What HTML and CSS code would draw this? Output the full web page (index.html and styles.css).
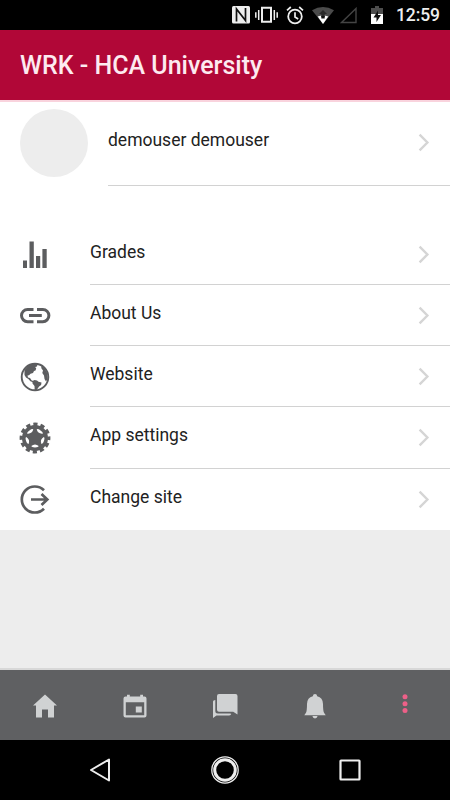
FILE: index.html
```html
<!DOCTYPE html>
<html lang="en">
<head>
    <meta charset="UTF-8">
    <meta name="viewport" content="width=device-width, initial-scale=1.0">
    <title>WRK - HCA University</title>
    <link rel="stylesheet" href="styles.css">
</head>
<body>
    <div class="status-bar">
        <!-- nfc -->
        <svg width="18" height="18" viewBox="0 0 18 18"><rect width="18" height="17.5" rx="1.5" fill="#eee"/><path d="M4.500 15.500V3L13.500 14.500V2" fill="none" stroke="#111" stroke-width="1.700"/></svg>
        <!-- vibrate -->
        <svg class="vibrate" width="23" height="18" viewBox="0 0 23 18"><path d="M7 1.800h9v14H7z" fill="none" stroke="#eee" stroke-width="2"/><path d="M3.700 4v10M.8 6.200v5.500M19.300 4v10M22.200 6.200v5.500" stroke="#eee" stroke-width="1.500"/></svg>
        <!-- alarm -->
        <svg class="alarm" width="18" height="19" viewBox="0 0 18 19"><circle cx="9" cy="10.500" r="6.800" fill="none" stroke="#eee" stroke-width="1.800"/><path d="M1 4.300L4.800 1M17 4.300L13.200 1M9 6.300v4.700l3.200 2" fill="none" stroke="#eee" stroke-width="1.700"/></svg>
        <!-- wifi -->
        <svg class="wifi" width="22" height="17" viewBox="0 0 22 17"><path d="M0 3.200Q11-3 22 3.200L11 17z" fill="#4b4b4b"/><path d="M5.700 9.600L11 17l5.300-7.400Q11 7.500 5.700 9.600z" fill="#fff"/><path d="M11 3l4 4h-2.300v3H9.300V7H7z" fill="#292929"/><path d="M9.300 9h3.400v2.500H9.300z" fill="#111"/></svg>
        <!-- signal -->
        <svg class="signal" width="17" height="17" viewBox="0 0 17 17"><path d="M1.500 15.500L16 1.500v14z" fill="none" stroke="#444" stroke-width="1.400"/></svg>
        <!-- battery -->
        <svg class="battery" width="12" height="18" viewBox="0 0 12 18"><path d="M4 0h4v2h4v16H0V2h4z" fill="#4d4d4d"/><path d="M0 8h12v10H0z" fill="#fff"/><path d="M7 4.500L2.500 11.500h3V16L10 9H7z" fill="#111"/></svg>
        <span class="clock">12:59</span>
    </div>

    <div class="header">
        <h1>WRK - HCA University</h1>
    </div>

    <div class="content">
        <div class="profile">
            <div class="avatar"></div>
            <div class="profile-name">
                <span>demouser demouser</span>
                <svg class="arrow" width="12" height="19" viewBox="0 0 12 19"><path d="M1.600 1.600L9.400 9.500L1.600 17.400"/></svg>
            </div>
        </div>

        <div class="menu">
            <div class="menu-item">
                <div class="menu-icon">
                    <svg width="32" height="32" viewBox="0 0 32 32"><path d="M4 21.500h4V29H4zM10.500 2.500h4.300V29h-4.300zM17 17h4.200v12H17zM23.400 10h4.300v19h-4.300z"/></svg>
                </div>
                <div class="menu-label">
                    <span>Grades</span>
                    <svg class="arrow" width="12" height="19" viewBox="0 0 12 19"><path d="M1.600 1.600L9.400 9.500L1.600 17.400"/></svg>
                </div>
            </div>
            <div class="menu-item">
                <div class="menu-icon">
                    <svg width="32" height="32" viewBox="0 0 32 32"><path d="M14.500 9.500H8.600a6.100 6.100 0 0 0 0 12.200h5.900M18 9.500h5.800a6.100 6.100 0 0 1 0 12.200H18M10 15.600h12.800" fill="none" stroke="#5c5d5f" stroke-width="3"/></svg>
                </div>
                <div class="menu-label">
                    <span>About Us</span>
                    <svg class="arrow" width="12" height="19" viewBox="0 0 12 19"><path d="M1.600 1.600L9.400 9.500L1.600 17.400"/></svg>
                </div>
            </div>
            <div class="menu-item">
                <div class="menu-icon">
                    <svg width="32" height="32" viewBox="0 0 32 32"><circle cx="16" cy="16" r="13.300" fill="none" stroke="#5c5d5f" stroke-width="1.900"/><path d="M5.500 9L10 4l6-1.500 2.500 1-.5 2-1.800.5 1 1.500-.7 2-1.500.5-1 2-2.500.7-1.500 1.500-1.500.3.500 2 2 .5 1.500 2.300 2 1-.6.900-2.500-.9-2-2.300-2.400-1.500-1.500-2.500z"/><path d="M13.500 20l2-1 2.500.5 1.500 1.200 3 .8-.4 2.500-2 1.500-2.600 3.700-1.800-.5-.2-3.700-2-2.500z"/><path d="M22 5l3.500 2 3 5.500.2 5-1.700 3-1.500-2.500-.5-3.500-1.700-2.500.7-2.500-1.500-2z"/></svg>
                </div>
                <div class="menu-label">
                    <span>Website</span>
                    <svg class="arrow" width="12" height="19" viewBox="0 0 12 19"><path d="M1.600 1.600L9.400 9.500L1.600 17.400"/></svg>
                </div>
            </div>
            <div class="menu-item">
                <div class="menu-icon">
                    <!-- 12 teeth, five openings -->
                    <svg width="32" height="32" viewBox="0 0 32 32">
                        <circle cx="16" cy="16" r="13"/>
                        <circle cx="16" cy="16" r="13.700" fill="none" stroke="#5c5d5f" stroke-width="3.400" stroke-dasharray="4.200 2.973" stroke-dashoffset="2.100"/>
                        <g fill="#fff">
                            <path id="hole" d="M12.300 24Q16 20.800 19.700 24Q19.500 25.400 16 25.400Q12.500 25.400 12.300 24z"/>
                            <use href="#hole" transform="rotate(72 16 16)"/>
                            <use href="#hole" transform="rotate(144 16 16)"/>
                            <use href="#hole" transform="rotate(216 16 16)"/>
                            <use href="#hole" transform="rotate(288 16 16)"/>
                        </g>
                    </svg>
                </div>
                <div class="menu-label">
                    <span>App settings</span>
                    <svg class="arrow" width="12" height="19" viewBox="0 0 12 19"><path d="M1.600 1.600L9.400 9.500L1.600 17.400"/></svg>
                </div>
            </div>
            <div class="menu-item">
                <div class="menu-icon">
                    <svg width="32" height="32" viewBox="0 0 32 32"><path d="M25 6.300a13 13 0 1 0 0 18.400M12 15.500h16M22.500 10L28.300 15.500l-5.800 5.500" fill="none" stroke="#5c5d5f" stroke-width="2.700"/></svg>
                </div>
                <div class="menu-label">
                    <span>Change site</span>
                    <svg class="arrow" width="12" height="19" viewBox="0 0 12 19"><path d="M1.600 1.600L9.400 9.500L1.600 17.400"/></svg>
                </div>
            </div>
        </div>
    </div>

    <div class="tabs">
        <div class="tab">
            <svg width="26" height="26" viewBox="0 0 26 26"><path d="M13 1.500L25 12.500h-3V24.500h-6v-8h-6v8H4V12.500H1z"/></svg>
        </div>
        <div class="tab">
            <svg width="26" height="26" viewBox="0 0 26 26"><path fill-rule="evenodd" d="M5 1.700h2.800v1.800h10.400V1.700H21v1.800h1.500q2 0 2 2v17q0 2-2 2h-19q-2 0-2-2v-17q0-2 2-2H5zM3.800 9.300v12.900h18.400V9.300zM13.800 13.500h6v6h-6z"/></svg>
        </div>
        <div class="tab">
            <svg width="26" height="26" viewBox="0 0 26 26"><path d="M7 1h16.500q2 0 2 2v18.500l-4.300-2.700H7q-2 0-2-2V3q0-2 2-2z"/><path d="M1 8.500q0-1.200 2.300-1.500v11q0 2.500 2.500 2.500h12.500l1 .5q-1 1.500-2.500 1.500H4.500L1 25z"/></svg>
        </div>
        <div class="tab">
            <svg width="26" height="26" viewBox="0 0 26 26"><path d="M13 1q2 0 2.200 2.300 5.600 1.300 5.800 7.700 0 7.500 1.200 9l1.500 2.300H2.300L3.800 20Q5 18.500 5 11q.2-6.400 5.800-7.700Q11 1 13 1zM10.400 23h5.200q-.4 2.400-2.600 2.400T10.400 23z"/></svg>
        </div>
        <div class="tab active">
            <svg width="26" height="26" viewBox="0 0 26 26"><circle cx="13" cy="3.700" r="2.500"/><circle cx="13" cy="10.700" r="2.500"/><circle cx="13" cy="17.500" r="2.500"/></svg>
        </div>
    </div>

    <div class="nav-bar">
        <svg width="30" height="30" viewBox="0 0 30 30"><path d="M6 15L24 4.500v21z" stroke-width="2" stroke-linejoin="round"/></svg>
        <svg width="30" height="30" viewBox="0 0 30 30"><circle cx="15" cy="15" r="13.200" stroke-width="1.300"/><circle cx="15" cy="15" r="10.300" stroke-width="3"/></svg>
        <svg width="30" height="30" viewBox="0 0 30 30"><rect x="5.500" y="5.500" width="19" height="19" rx=".5" stroke-width="2.200"/></svg>
    </div>
</body>
</html>
```
FILE: styles.css
```css
body {
    font-family: Roboto, Arial, sans-serif;
    color: #222;
    margin: 0;
    height: 800px;
    display: flex;
    flex-direction: column;
    background: #ededed;
    overflow: hidden;
}
svg {
    display: block;
    flex: none;
}
.status-bar {
    height: 30px;
    background: #000;
    display: flex;
    align-items: center;
    justify-content: flex-end;
    padding-right: 10px;
    box-sizing: border-box;
}
.vibrate {
    margin-left: 5px;
}
.alarm {
    margin-left: 8px;
}
.wifi {
    margin-left: 8px;
}
.signal {
    margin-left: 6px;
}
.battery {
    margin-left: 14px;
}
.clock {
    width: 44px;
    margin-left: 13px;
    color: #eee;
    font-size: 17.5px;
    font-weight: 500;
    line-height: 32px;
    letter-spacing: -0.1px;
    white-space: nowrap;
}
.header {
    height: 70px;
    background: #b10737;
    padding-left: 20px;
}
.header h1 {
    margin: 0;
    color: #fdeaf0;
    font-size: 25px;
    font-weight: 500;
    line-height: 71px;
}
.content {
    background: #fff;
    border-top: 2px solid #f9d3dd;
    height: 428px;
}
.profile {
    display: flex;
    height: 84px;
    padding-left: 20px;
}
.avatar {
    width: 68px;
    height: 68px;
    margin: 7px 20px 0 0;
    border-radius: 50%;
    background: #ededed;
}
.profile-name, .menu-label {
    flex: 1;
    display: flex;
    align-items: center;
    justify-content: space-between;
    padding-right: 20px;
    border-bottom: 1px solid #d2d2d2;
    font-size: 17.5px;
}
.profile-name span {
    margin-bottom: 7px;
}
.profile-name .arrow {
    margin-bottom: 2px;
}
.arrow {
    fill: none;
    stroke: #d5d5d5;
    stroke-width: 2.4;
}
.menu {
    display: grid;
    grid-template-rows: 61px 61px 61px 62px 61px;
    margin-top: 38px;
}
.menu-item {
    display: flex;
    padding-left: 19px;
}
.menu-icon {
    width: 71px;
    display: flex;
    align-items: center;
}
.menu-icon svg {
    fill: #5c5d5f;
}
.menu-label span {
    margin-bottom: 5px;
}
.menu-item:last-child .menu-label {
    border-bottom: none;
}
.tabs {
    height: 70px;
    margin-top: auto;
    border-top: 2px solid #d8d8d8;
    background: #5f6062;
    display: grid;
    grid-template-columns: repeat(5, 1fr);
}
.tab {
    display: flex;
    justify-content: center;
    padding-top: 23px;
}
.tab svg {
    fill: #d0d2d3;
}
.tab.active svg {
    fill: #ed6088;
}
.nav-bar {
    height: 60px;
    background: #000;
    display: flex;
    align-items: center;
    justify-content: center;
    gap: 95px;
}
.nav-bar svg {
    fill: none;
    stroke: #eee;
}
```
